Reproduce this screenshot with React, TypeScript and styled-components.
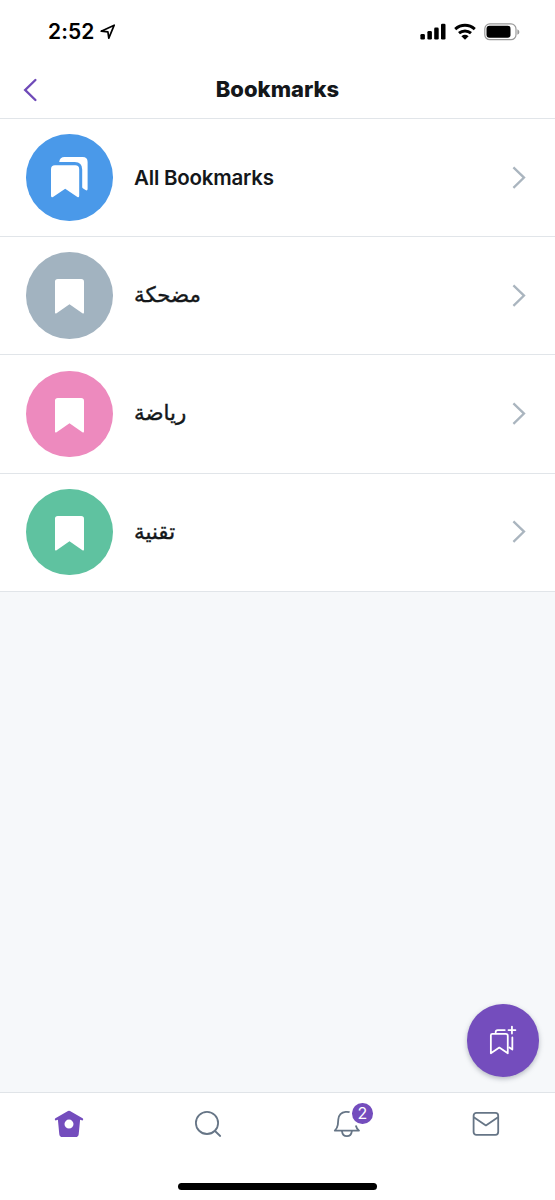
import React from "react";
import styled, { createGlobalStyle } from "styled-components";

const Global = createGlobalStyle`
  * { box-sizing: border-box; }
  html, body { margin: 0; padding: 0; }
  body { background: #f6f8fa; }
  svg { display: block; flex: none; overflow: visible; }
`;

const Screen = styled.div`
  width: 555px;
  height: 1200px;
  display: flex;
  flex-direction: column;
  position: relative;
  overflow: hidden;
  background: #f6f8fa;
  color: #14171a;
  font-family: Inter, "DejaVu Sans", sans-serif;
`;

const Top = styled.header`
  height: 119px;
  flex: none;
  background: #fff;
  border-bottom: 1px solid #e1e5e9;
`;

const StatusBar = styled.div`
  height: 62px;
  padding: 1px 35px 0 48px;
  display: flex;
  align-items: center;
  justify-content: space-between;
`;

const StatusGroup = styled.div<{ $gap: number }>`
  display: flex;
  align-items: center;
  gap: ${(p) => p.$gap}px;
`;

const Clock = styled.span`
  font-size: 21px;
  line-height: 24px;
  font-weight: 600;
  letter-spacing: 0.1px;
  color: #000;
  width: 47px;
  padding-top: 1px;
  white-space: nowrap;
`;

const NavBar = styled.div`
  height: 55px;
  padding: 0 23px;
  display: grid;
  grid-template-columns: 30px 1fr 30px;
  align-items: center;
`;

const Title = styled.h1`
  margin: 0;
  padding-bottom: 1px;
  text-align: center;
  font-size: 22px;
  line-height: 28px;
  font-weight: 800;
  letter-spacing: 0;
`;

const List = styled.main`
  flex: 1;
`;

const Row = styled.div`
  height: 118.2px;
  padding: 0 28.6px 0 26px;
  display: flex;
  align-items: center;
  background: #fff;
  border-bottom: 1px solid #e1e5e9;
`;

const Disc = styled.div<{ $color: string }>`
  width: 86.6px;
  height: 86.6px;
  flex: none;
  border-radius: 50%;
  background: ${(p) => p.$color};
`;

const Label = styled.div`
  flex: 1;
  margin-left: 21.5px;
  padding-top: 1px;
  font-size: 20.5px;
  letter-spacing: -0.22px;
  line-height: 30px;
  font-weight: 600;
  white-space: nowrap;
`;

const ArabicLabel = styled(Label)`
  padding: 0 0 1px;
  font-family: "DejaVu Sans", sans-serif;
  font-size: 21.3px;
  letter-spacing: 0;
  font-weight: 400;
  -webkit-text-stroke: 0.4px #14171a;
`;

const Fab = styled.button`
  position: absolute;
  left: 466.7px;
  top: 1004.2px;
  width: 72.6px;
  height: 72.6px;
  padding: 0;
  border: 0;
  border-radius: 50%;
  background: #744dbd;
  box-shadow: 0 2px 5px rgba(60, 70, 90, 0.35);
`;

const TabBar = styled.nav`
  height: 108.5px;
  flex: none;
  background: #fff;
  border-top: 1px solid #e0e4e8;
`;

const Tabs = styled.div`
  height: 62px;
  display: grid;
  grid-template-columns: repeat(4, 1fr);
`;

const Tab = styled.div`
  position: relative;
  display: flex;
  align-items: center;
  justify-content: center;
`;

const Badge = styled.span`
  position: absolute;
  left: 74.6px;
  top: 10.6px;
  width: 20.6px;
  height: 20.6px;
  border-radius: 50%;
  background: #744dbd;
  color: #fff;
  font-size: 16px;
  line-height: 20.6px;
  text-align: center;
`;

const HomeIndicator = styled.div`
  width: 199px;
  height: 6.8px;
  margin: 28.4px auto 0;
  border-radius: 4px;
  background: #000;
`;

const BookmarkIcon = () => (
  <svg width="86.6" height="86.6" viewBox="0 0 86.6 86.6" fill="#fff">
    <path d="M31.8 27H55.2Q58 27 58 29.8V60.4Q58 62.2 56.4 61.2L43.5 52.3L30.6 61.2Q29 62.2 29 60.4V29.8Q29 27 31.8 27Z" />
  </svg>
);

const BookmarksIcon = () => (
  <svg width="86.6" height="86.6" viewBox="0 0 86.6 86.6" fill="#fff">
    <path d="M29 31.2H49.2Q53.2 31.2 53.2 35.2V61.8Q53.2 64 51.4 62.9L39.2 54.8L27 62.9Q25 64 25 61.8V35.2Q25 31.2 29 31.2Z" />
    <path d="M33.2 28Q33.8 23 38.6 23H56.6Q61.6 23 61.6 28V54.8Q61.6 57.3 59.5 56L56.8 54.2Q56.2 53.8 56.2 53V35.5Q56.2 28 48.8 28Z" />
  </svg>
);

const ChevronIcon = () => (
  <svg width="14" height="24" viewBox="0 0 14 24" fill="none" stroke="#aab5bf" strokeWidth="2.3">
    <path d="M1.4 1.4L12 11.6L1.4 21.8" />
  </svg>
);

const folders = [
  { name: "مضحكة", color: "#a2b3c0" },
  { name: "رياضة", color: "#ed8abe" },
  { name: "تقنية", color: "#5fc2a0" },
];

export default function App() {
  return (
    <>
      <Global />
      <Screen>
        <Top>
          <StatusBar>
            <StatusGroup $gap={5}>
              <Clock>2:52</Clock>
              <svg width="16" height="16" viewBox="0 0 16 16" fill="none" stroke="#000" strokeWidth="1.7" strokeLinejoin="round">
                <path d="M1.2 7.2L14.2 1.2L8.8 14.2L7.9 7.9Z" />
              </svg>
            </StatusGroup>
            <StatusGroup $gap={8}>
              <svg width="26" height="17" viewBox="0 0 26 17">
                <rect x="0.4" y="11" width="4.5" height="5.6" rx="1.3" />
                <rect x="7.4" y="8" width="4.5" height="8.6" rx="1.3" />
                <rect x="14.2" y="4.6" width="4.5" height="12" rx="1.3" />
                <rect x="21" y="0.8" width="4.5" height="15.8" rx="1.3" />
              </svg>
              <svg width="22" height="17" viewBox="0 0 22 17">
                <g fill="none" stroke="#000" strokeWidth="3">
                  <path d="M1.2 6.1Q5.6 2.3 11 2.3T20.8 6.1" />
                  <path d="M5 10.1Q7.6 7.9 11 7.9T17 10.1" />
                </g>
                <path d="M11 16.7L7.4 13.2Q11 10.4 14.6 13.2Z" />
              </svg>
              <svg width="36" height="18" viewBox="0 0 36 18">
                <rect x="0.8" y="0.9" width="31.2" height="15.8" rx="5" fill="none" stroke="#999" strokeWidth="1.2" />
                <rect x="2.5" y="2.8" width="24" height="12" rx="3" />
                <path d="M33.4 6.2Q35.4 7.1 35.4 9T33.4 11.8Z" fill="#999" />
              </svg>
            </StatusGroup>
          </StatusBar>
          <NavBar>
            <svg width="15" height="24" viewBox="0 0 15 24" fill="none" stroke="#6f4ab8" strokeWidth="2.4" strokeLinecap="round">
              <path d="M12.4 2L2.2 12L12.4 22" />
            </svg>
            <Title>Bookmarks</Title>
          </NavBar>
        </Top>
        <List>
          <Row>
            <Disc $color="#4a99e9"><BookmarksIcon /></Disc>
            <Label>All Bookmarks</Label>
            <ChevronIcon />
          </Row>
          {folders.map((f) => (
            <Row key={f.name}>
              <Disc $color={f.color}><BookmarkIcon /></Disc>
              <ArabicLabel>{f.name}</ArabicLabel>
              <ChevronIcon />
            </Row>
          ))}
        </List>
        <Fab aria-label="New folder">
          <svg width="72.6" height="72.6" viewBox="0 0 73 73" fill="none" stroke="#fff" strokeWidth="1.8" strokeLinecap="round" strokeLinejoin="round">
            <path d="M25.5 30H39Q41 30 41 32V49.6L32.5 43.8L24 49.6V31.5Q24 30 25.5 30Z" />
            <path d="M28.8 28.6Q28.8 26.2 31 26.2H38" />
            <path d="M45.6 33.7V45.8L42.6 43.8" />
            <path d="M45.2 22.7V29.7M41.7 26.2H48.7" />
          </svg>
        </Fab>
        <TabBar>
          <Tabs>
            <Tab>
              <svg width="30" height="28" viewBox="0 0 30 28" fill="#744dbd">
                <path fillRule="evenodd" d="M15 0.8Q15.5 0.8 16 1.1L28.6 8.3Q29.5 8.9 29.1 9.8T27.8 10.3L26.1 9.7L24.7 24.2Q24.4 27 21.6 27H8.4Q5.6 27 5.3 24.2L3.9 9.7L2.2 10.3Q1.3 10.7 0.9 9.8T1.4 8.3L14 1.1Q14.5 0.8 15 0.8ZM15 9.6A4.5 4.5 0 1 0 15 18.6A4.5 4.5 0 1 0 15 9.6Z" />
              </svg>
            </Tab>
            <Tab>
              <svg width="28" height="28" viewBox="0 0 28 28" fill="none" stroke="#667586" strokeWidth="1.8" strokeLinecap="round">
                <circle cx="13" cy="12.9" r="11.1" />
                <path d="M21 21L26.2 26" />
              </svg>
            </Tab>
            <Tab>
              <svg width="28" height="28" viewBox="0 0 28 28" fill="none" stroke="#667586" strokeWidth="1.8" strokeLinejoin="round">
                <path d="M16.6 2.2Q14.8 1.7 12.6 1.9Q6 2.6 5.3 9.4L4.8 14.8Q4.3 18 1.8 20.6H26Q23.3 18 22.8 15.5" />
                <path d="M8.9 20.8Q9.6 26.2 13.9 26.2T18.9 20.8" />
              </svg>
              <Badge>2</Badge>
            </Tab>
            <Tab>
              <svg width="28" height="28" viewBox="0 0 28 28" fill="none" stroke="#667586" strokeWidth="1.8" strokeLinejoin="round">
                <rect x="1.6" y="2.9" width="24.6" height="22" rx="2.8" />
                <path d="M1.8 7.2L13.9 15.4L26 7.2" />
              </svg>
            </Tab>
          </Tabs>
          <HomeIndicator />
        </TabBar>
      </Screen>
    </>
  );
}
